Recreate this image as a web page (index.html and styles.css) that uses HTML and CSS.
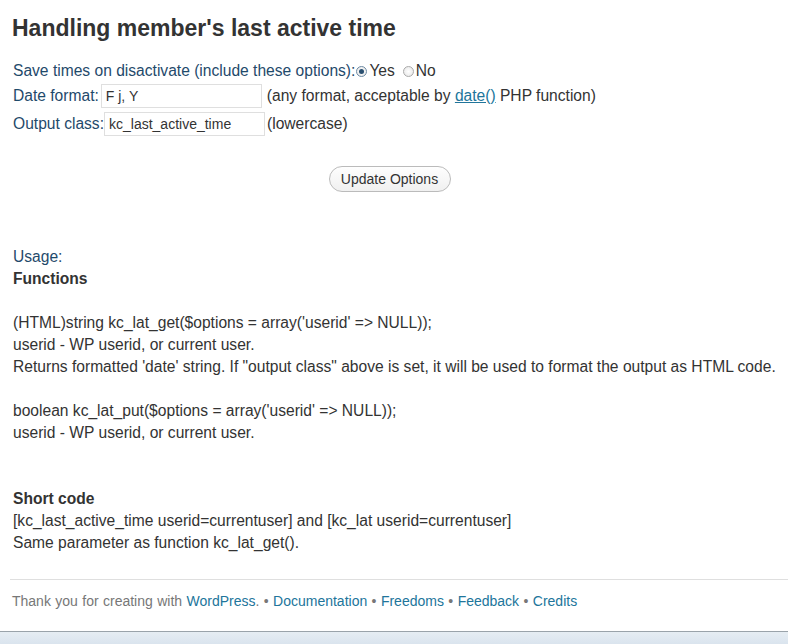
FILE: index.html
```html
<!DOCTYPE html>
<html>
<head>
<meta charset="utf-8">
<link rel="stylesheet" href="styles.css">
</head>
<body>
<div class="page">
  <div class="wrap">
    <h2 class="title">Handling member's last active time</h2>
    <form class="options">
      <div class="row row-first">
        <span class="label">Save times on disactivate (include these options):</span><label class="radio"><span class="rb rb-on"></span>Yes</label><label class="radio radio-no"><span class="rb"></span>No</label>
      </div>
      <div class="row">
        <span class="label">Date format:</span><span class="input in1">F j, Y</span><span class="note note1">(any format, acceptable by <a class="link" href="#">date()</a> PHP function)</span>
      </div>
      <div class="row">
        <span class="label">Output class:</span><span class="input in2">kc_last_active_time</span><span class="note note2">(lowercase)</span>
      </div>
      <div class="submit"><span class="button">Update Options</span></div>
    </form>
    <div class="usage">
      <div class="label">Usage:</div>
      <div class="strong">Functions</div>
      <div class="blank"></div>
      <div>(HTML)string kc_lat_get($options = array('userid' =&gt; NULL));</div>
      <div>userid - WP userid, or current user.</div>
      <div>Returns formatted 'date' string. If "output class" above is set, it will be used to format the output as HTML code.</div>
      <div class="blank"></div>
      <div>boolean kc_lat_put($options = array('userid' =&gt; NULL));</div>
      <div>userid - WP userid, or current user.</div>
      <div class="blank"></div>
      <div class="blank"></div>
      <div class="strong">Short code</div>
      <div>[kc_last_active_time userid=currentuser] and [kc_lat userid=currentuser]</div>
      <div>Same parameter as function kc_lat_get().</div>
    </div>
  </div>
  <div class="footer">
    <span class="thanks">Thank you for creating with <a href="#">WordPress</a>.</span> &bull; <a href="#">Documentation</a> &bull; <a href="#">Freedoms</a> &bull; <a href="#">Feedback</a> &bull; <a href="#">Credits</a>
  </div>
  <div class="bottombar"></div>
</div>
</body>
</html>
```
FILE: styles.css
```css
html, body {
  margin: 0;
  padding: 0;
  background: #fff;
}
body {
  font-family: "Liberation Sans", Arial, sans-serif;
  color: #333;
  width: 788px;
  height: 644px;
  overflow: hidden;
}
.page {
  display: flex;
  flex-direction: column;
  height: 644px;
}
.wrap {
  padding: 0 0 0 13px;
  flex: 1;
}
.title {
  font-size: 23px;
  font-weight: bold;
  color: #333;
  margin: 14px 0 0 -1px;
  line-height: 28px;
}
.options {
  margin-top: 17px;
  font-size: 15.6px;
}
.row {
  display: flex;
  align-items: center;
  height: 28px;
  white-space: pre;
}
.row-first { height: 23px; }
.label {
  color: #1f4a6b;
}
.radio {
  display: inline-flex;
  align-items: center;
  color: #333;
}
.radio-no { margin-left: 7px; }
.rb {
  width: 9px;
  height: 9px;
  border-radius: 50%;
  border: 1px solid #aaa;
  background: radial-gradient(circle, #fff 0, #e4e4e4 100%);
  margin: 1px 2px 0 1px;
  position: relative;
}
.rb-on {
  border-color: #6d8aa3;
}
.rb-on::after {
  content: "";
  position: absolute;
  left: 2px;
  top: 2px;
  width: 5px;
  height: 5px;
  border-radius: 50%;
  background: #2a4f70;
}
.input {
  display: inline-block;
  box-sizing: border-box;
  width: 161px;
  height: 24px;
  border: 1px solid #dfdfdf;
  font-size: 14px;
  line-height: 22px;
  padding: 0 4px;
  color: #333;
  background: #fff;
}
.in1 { margin-left: 2px; }
.in2 { margin-left: 0; }
.note { color: #333; }
.note1 { margin-left: 5px; }
.note2 { margin-left: 2px; }
.link { color: #21759b; text-decoration: underline; }
.submit {
  display: flex;
  justify-content: center;
  margin: 28px 0 0 -22px;
}
.button {
  display: inline-block;
  box-sizing: border-box;
  width: 122px;
  height: 26px;
  border: 1px solid #bbb;
  border-radius: 13px;
  background: linear-gradient(#fefefe, #f0f0f0);
  font-size: 14px;
  line-height: 24px;
  text-align: center;
  color: #333;
}
.usage {
  margin-top: 54px;
  font-size: 15.6px;
  line-height: 22px;
  color: #333;
}
.usage .label { color: #1f4a6b; }
.strong { font-weight: bold; }
.blank { height: 22px; }
.footer {
  margin: 0 0 0 10px;
  border-top: 1px solid #dfdfdf;
  padding: 13px 0 0 2px;
  height: 52px;
  box-sizing: border-box;
  font-size: 14px;
  color: #777;
  word-spacing: 0.5px;
}
.footer a { color: #21759b; text-decoration: none; }
.bottombar {
  height: 12px;
  border-top: 1px solid #9aa3aa;
  background: linear-gradient(#e6edf3, #dae4ee);
}
```
